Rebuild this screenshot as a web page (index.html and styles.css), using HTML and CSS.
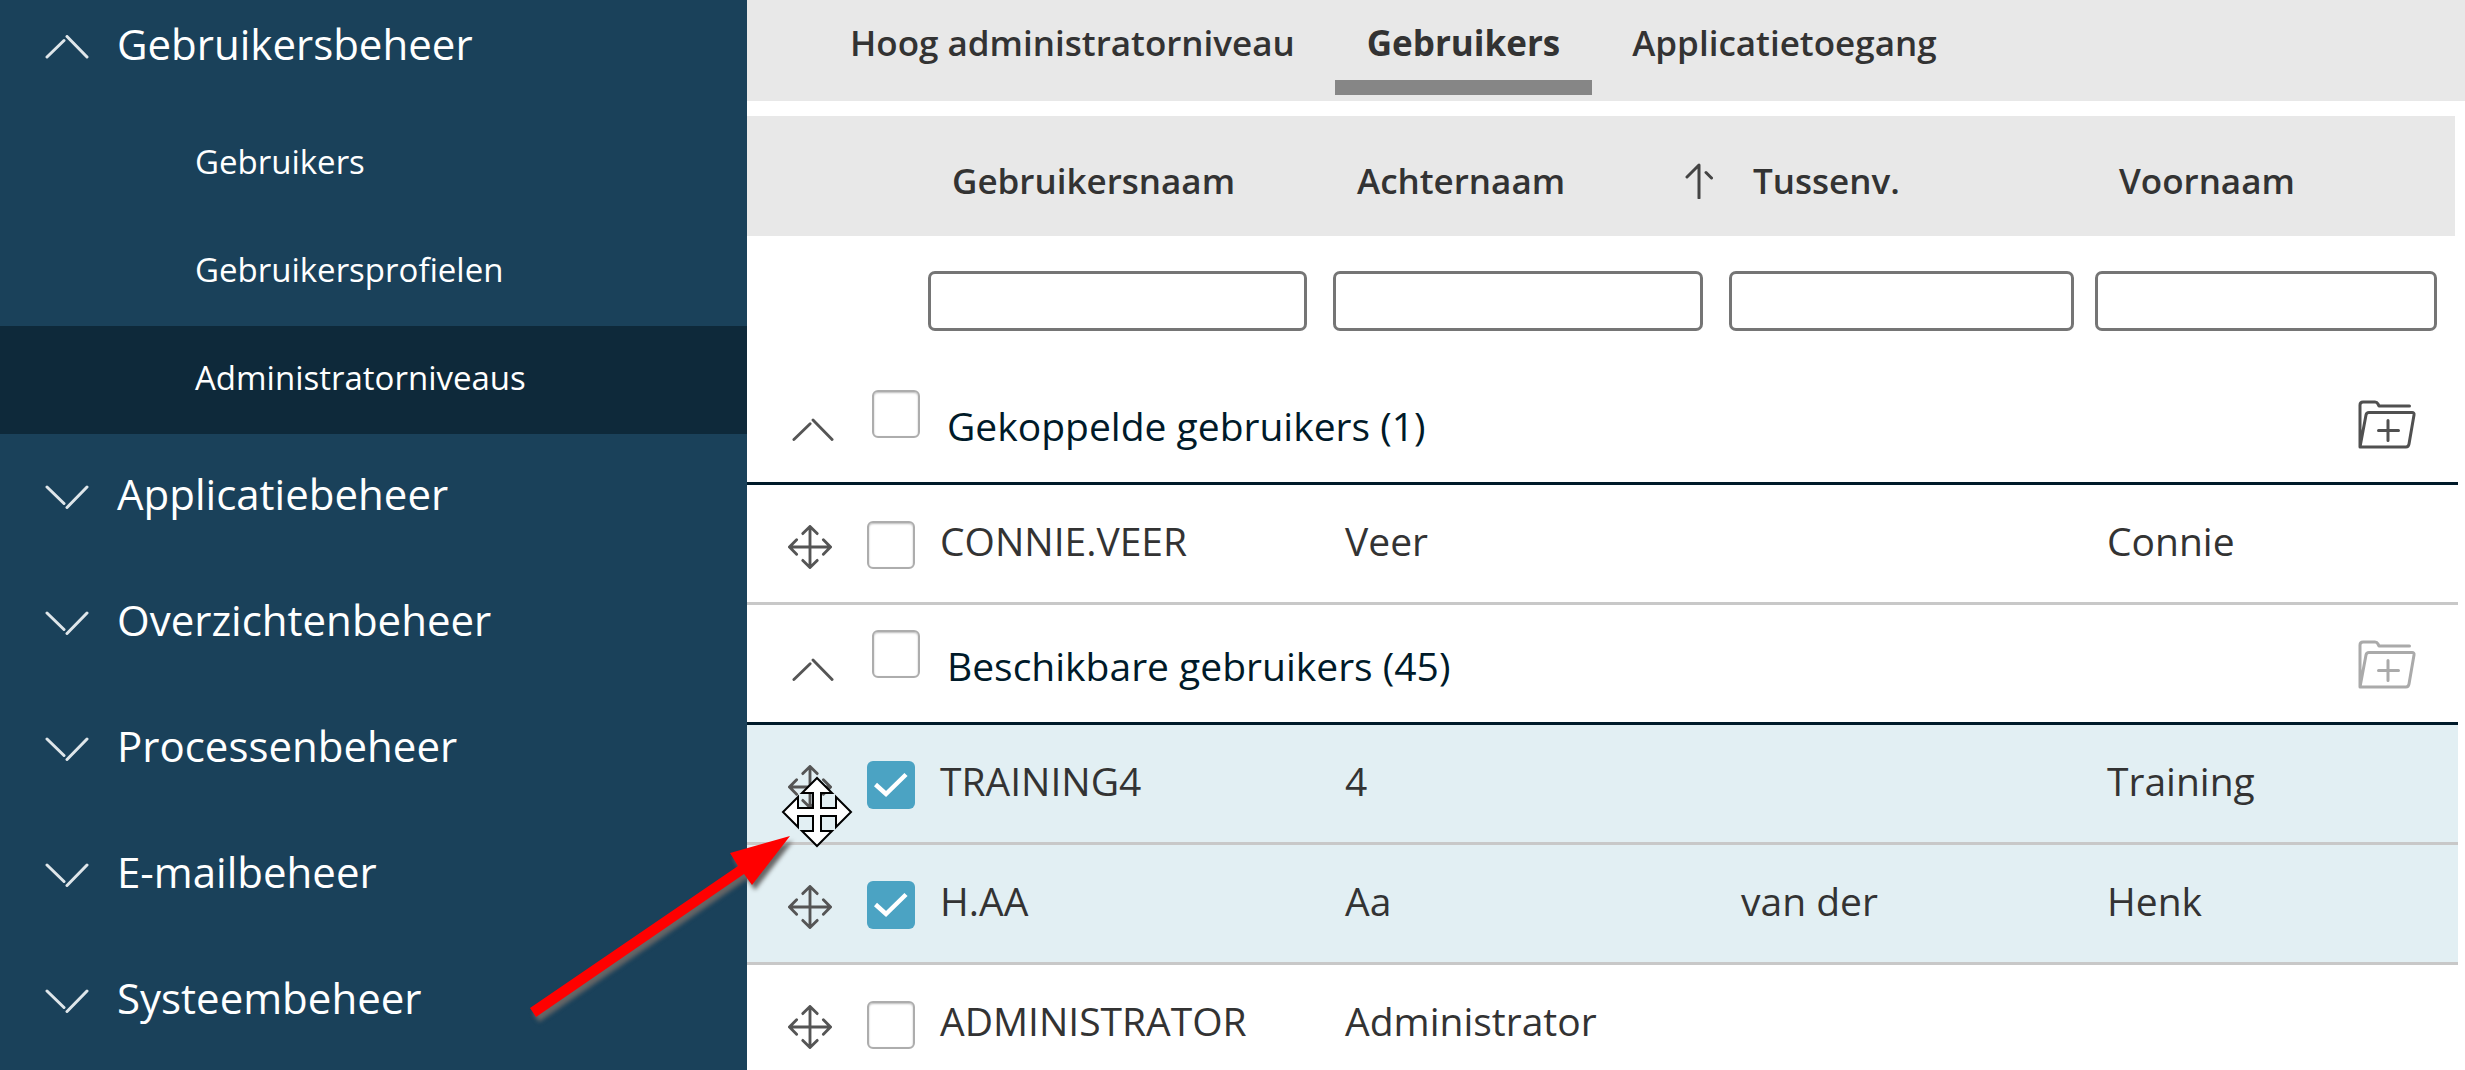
FILE: index.html
```html
<!DOCTYPE html>
<html lang="nl">
<head>
<meta charset="utf-8">
<title>Administratorniveaus</title>
<link rel="stylesheet" href="styles.css">
</head>
<body>
<svg class="symbols" aria-hidden="true">
  <symbol id="chevron" viewBox="0 0 44 24"><path d="M2 22 19 5.500M22 1.500 42 22"/></symbol>
  <symbol id="move" viewBox="0 0 46 46"><path d="M23 2v42M2 23h42M15.500 9 23 1.500 30.500 9M15.500 37l7.500 7.500 7.500-7.500M9 15.500 1.500 23 9 30.500M37 15.500l7.500 7.500-7.500 7.500"/></symbol>
  <symbol id="folder" viewBox="0 0 58 50"><path d="M2 47V5q0-3 3-3h12q2 0 3 2l1 2h30.500M2 47 8 15q.5-2.500 3-2.500h43q2.500 0 2 2.500l-5 29q-.5 3-3 3ZM30 20.500v20M20.500 30.500h20"/></symbol>
</svg>

<div class="app">
  <nav class="sidebar" aria-label="Beheer">
    <button type="button" class="menu" aria-expanded="true"><svg class="chevron"><use href="#chevron"/></svg><span>Gebruikersbeheer</span></button>
    <a class="submenu" href="#">Gebruikers</a>
    <a class="submenu" href="#">Gebruikersprofielen</a>
    <a class="submenu active" href="#" aria-current="page">Administratorniveaus</a>
    <button type="button" class="menu" aria-expanded="false"><svg class="chevron down"><use href="#chevron"/></svg><span>Applicatiebeheer</span></button>
    <button type="button" class="menu" aria-expanded="false"><svg class="chevron down"><use href="#chevron"/></svg><span>Overzichtenbeheer</span></button>
    <button type="button" class="menu" aria-expanded="false"><svg class="chevron down"><use href="#chevron"/></svg><span>Processenbeheer</span></button>
    <button type="button" class="menu" aria-expanded="false"><svg class="chevron down"><use href="#chevron"/></svg><span>E-mailbeheer</span></button>
    <button type="button" class="menu" aria-expanded="false"><svg class="chevron down"><use href="#chevron"/></svg><span>Systeembeheer</span></button>
  </nav>

  <main class="content">
    <div class="tabs">
      <a class="tab" href="#">Hoog administratorniveau</a>
      <a class="tab selected" href="#" aria-current="true">Gebruikers</a>
      <a class="tab" href="#">Applicatietoegang</a>
    </div>

    <table class="users">
      <colgroup><col class="c-drag"><col class="c-check"><col class="c-user"><col class="c-last"><col class="c-infix"><col></colgroup>
      <thead>
        <tr>
          <th></th><th></th>
          <th scope="col">Gebruikersnaam</th>
          <th scope="col" aria-sort="ascending"><div class="sorted">Achternaam<svg class="sort" viewBox="0 0 28 36"><path d="M14 35V2L2 14M21 9.500l5.500 5.500"/></svg></div></th>
          <th scope="col">Tussenv.</th>
          <th scope="col">Voornaam</th>
        </tr>
      </thead>
      <tbody>
        <tr class="filters">
          <td></td><td></td>
          <td><input type="text" aria-label="Filter gebruikersnaam"></td>
          <td><input type="text" aria-label="Filter achternaam"></td>
          <td><input type="text" aria-label="Filter tussenvoegsel"></td>
          <td><input type="text" aria-label="Filter voornaam"></td>
        </tr>
        <tr class="group">
          <td class="drag"><button type="button" class="icon" aria-label="Inklappen"><svg class="chevron"><use href="#chevron"/></svg></button></td>
          <td class="check"><input type="checkbox" id="g1"></td>
          <td colspan="3"><label for="g1">Gekoppelde gebruikers (1)</label></td>
          <td class="action"><button type="button" class="icon" aria-label="Koppelen"><svg class="folder"><use href="#folder"/></svg></button></td>
        </tr>
        <tr class="user">
          <td class="drag"><svg class="move"><use href="#move"/></svg></td>
          <td class="check"><input type="checkbox" id="u1"></td>
          <td><label for="u1">CONNIE.VEER</label></td><td>Veer</td><td></td><td>Connie</td>
        </tr>
        <tr class="group">
          <td class="drag"><button type="button" class="icon" aria-label="Inklappen"><svg class="chevron"><use href="#chevron"/></svg></button></td>
          <td class="check"><input type="checkbox" id="g2"></td>
          <td colspan="3"><label for="g2">Beschikbare gebruikers (45)</label></td>
          <td class="action"><button type="button" class="icon" aria-label="Koppelen" disabled><svg class="folder"><use href="#folder"/></svg></button></td>
        </tr>
        <tr class="user marked">
          <td class="drag"><svg class="move"><use href="#move"/></svg></td>
          <td class="check"><input type="checkbox" id="u2" checked></td>
          <td><label for="u2">TRAINING4</label></td><td>4</td><td></td><td>Training</td>
        </tr>
        <tr class="user marked">
          <td class="drag"><svg class="move"><use href="#move"/></svg></td>
          <td class="check"><input type="checkbox" id="u3" checked></td>
          <td><label for="u3">H.AA</label></td><td>Aa</td><td>van der</td><td>Henk</td>
        </tr>
        <tr class="user">
          <td class="drag"><svg class="move"><use href="#move"/></svg></td>
          <td class="check"><input type="checkbox" id="u4"></td>
          <td><label for="u4">ADMINISTRATOR</label></td><td>Administrator</td><td></td><td></td>
        </tr>
      </tbody>
    </table>
  </main>

  <svg class="pointer" viewBox="-36 -36 72 72" aria-hidden="true"><path d="M0-34 15-19H4V-4H19V-15L34 0 19 15V4H4V19H15L0 34-15 19H-4V4H-19V15L-34 0-19-15V-4H-4V-19H-15Z"/></svg>
  <svg class="arrow" viewBox="0 0 270 190" aria-hidden="true"><path d="M0 172 208 30 200 17 260 0 222 49 214 38 6 181Z"/></svg>
</div>
</body>
</html>
```
FILE: styles.css
```css
* { box-sizing: border-box; }

body {
  margin: 0;
  background: #fff;
  color: #333;
  font-family: "Open Sans", "Noto Sans", sans-serif;
  font-size: 39px;
  line-height: 54px;
}

button, input { font: inherit; color: inherit; }
a { color: inherit; text-decoration: none; }
svg { display: block; fill: none; stroke-linecap: round; stroke-linejoin: round; }

.symbols { position: absolute; width: 0; height: 0; }

.app {
  position: relative;
  display: flex;
  height: 100vh;
  overflow: hidden;
}

/* Sidebar */
.sidebar {
  flex: none;
  display: flex;
  flex-direction: column;
  width: 747px;
  background: #1a415a;
  color: #fff;
}

.menu {
  flex: none;
  display: flex;
  align-items: center;
  gap: 28px;
  height: 126px;
  padding: 0 45px;
  border: 0;
  background: none;
  font-size: 42px;
  text-align: left;
}
.menu:first-child { height: 110px; padding-bottom: 16px; }
.menu span { padding-bottom: 6px; }

.submenu {
  flex: none;
  height: 108px;
  padding: 25px 45px 29px 195px;
  font-size: 33px;
}
.submenu.active { background: #0e293a; }

.chevron { width: 44px; height: 24px; stroke: #555; stroke-width: 3; }
.menu .chevron { stroke: #dfe6ea; }
.chevron.down { transform: rotate(180deg) scaleX(-1); }

/* Tabs */
.content { flex: 1; min-width: 0; }

.tabs {
  display: flex;
  gap: 8px;
  height: 101px;
  padding-left: 71px;
  background: #e8e8e8;
}
.tab {
  height: 95px;
  padding: 16px 32px 0;
  border-bottom: 15px solid transparent;
  font-size: 35px;
  font-weight: 600;
}
.tab.selected { border-color: #868686; font-weight: 700; }

/* Table */
.users {
  table-layout: fixed;
  width: calc(100% - 7px);
  margin-top: 15px;
  border-collapse: separate;
  border-spacing: 0;
}
.c-drag { width: 110px; }
.c-check { width: 71px; }
.c-user { width: 405px; }
.c-last { width: 396px; }
.c-infix { width: 366px; }

th, td { padding: 0; text-align: left; vertical-align: middle; }

th {
  height: 120px;
  padding: 10px 0 0 24px;
  background: #e8e8e8;
  font-size: 35px;
  font-weight: 600;
}
th:last-child { border-right: 3px solid #fff; }

.sorted { display: flex; align-items: center; justify-content: space-between; padding-right: 16px; }
.sort { width: 28px; height: 36px; stroke: #444; stroke-width: 3; }

.filters td { height: 129px; padding-right: 26px; }
.filters td:nth-child(n+5) { padding-right: 21px; }
.filters input {
  display: block;
  width: 100%;
  height: 60px;
  padding: 0 12px;
  border: 3px solid #757575;
  border-radius: 7px;
  background: #fff;
}

.user td, .group td { height: 120px; border-bottom: 3px solid #c8c8c8; }
.user td { padding: 0 0 5px 12px; }
.group td { padding: 4px 0 0 19px; border-color: #001a29; color: #001a29; }
.marked td { background: #e2eff3; }

.user .drag { padding: 7px 0 0 41px; }
.group .drag { padding: 13px 0 0 45px; }
.user .check { padding: 3px 0 0 10px; }
.group .check { padding: 0 0 19px 15px; }
.group .action { padding: 2px 42px 0 0; }

.icon { display: block; padding: 0; border: 0; background: none; }
.action .icon { margin-left: auto; }
.move { width: 44px; height: 44px; stroke: #555; stroke-width: 3; }
.group .chevron { width: 42px; }
.folder { width: 58px; height: 50px; stroke: #505050; stroke-width: 3; }
.icon:disabled .folder { stroke: #aaa; }

.check input {
  appearance: none;
  display: block;
  width: 48px;
  height: 48px;
  margin: 0;
  border: 2px solid #adadad;
  border-radius: 6px;
  background: #fff;
  box-shadow: inset 0 1px 2px #bbb;
}
.check input:checked {
  border: 0;
  box-shadow: none;
  background: #4ba3c3 url("data:image/svg+xml,%3Csvg xmlns='http://www.w3.org/2000/svg' viewBox='0 0 48 48'%3E%3Cpath d='M8.500 23.500 19 33 39 13.500' fill='none' stroke='white' stroke-width='4.500'/%3E%3C/svg%3E") center / 48px 48px;
}

/* Mouse pointer and the annotation arrow over the table */
.pointer {
  position: absolute;
  left: 781px;
  top: 776px;
  width: 72px;
  height: 72px;
  fill: #fff;
  stroke: #000;
  stroke-width: 2;
  stroke-linejoin: miter;
}
.arrow {
  position: absolute;
  left: 530px;
  top: 836px;
  width: 270px;
  height: 190px;
  overflow: visible;
  fill: #f00;
  filter: drop-shadow(3px 5px 2px #666);
}
```
